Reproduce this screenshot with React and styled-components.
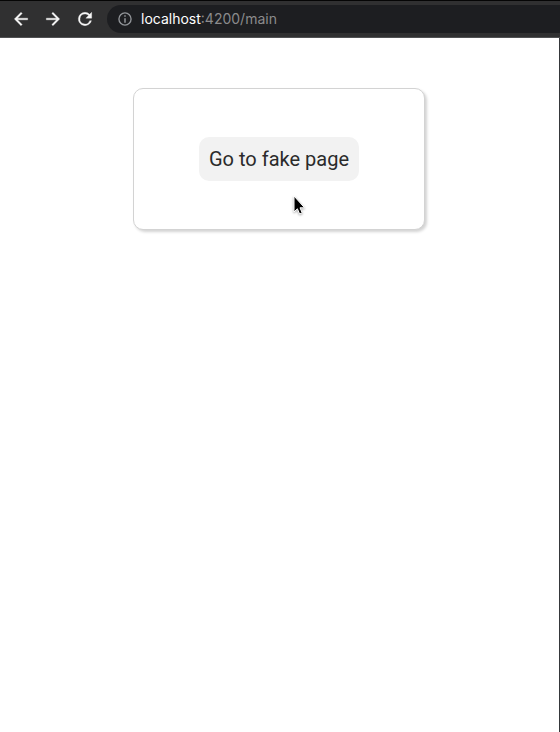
import React from "react";
import styled, { createGlobalStyle } from "styled-components";

const GlobalStyle = createGlobalStyle`
  *, *::before, *::after { box-sizing: border-box; }
  body { margin: 0; background: #ffffff; font-family: Roboto, sans-serif; }
`;

const Window = styled.div`
  display: flex;
  flex-direction: column;
  min-height: 100vh;
`;

const Toolbar = styled.header`
  display: flex;
  align-items: center;
  height: 38px;
  padding-left: 10px;
  background: #303031;
  border-top: 1px solid #050505;
  border-bottom: 1px solid #505153;
`;

const Navigation = styled.nav`
  display: flex;
  gap: 10px;
  margin-right: 11px;
`;

const IconButton = styled.button`
  display: flex;
  align-items: center;
  justify-content: center;
  width: 22px;
  height: 22px;
  padding: 0;
  border: 0;
  background: none;
  color: #f7f7f7;
`;

const Icon = styled.svg`
  display: block;
  flex: none;
  width: ${(p) => p.$size}px;
  height: ${(p) => p.$size}px;
  fill: currentColor;
`;

const AddressBar = styled.form`
  display: flex;
  flex: 1;
  align-items: center;
  height: 28px;
  padding-left: 9px;
  border-radius: 14px 0 0 14px;
  background: #1d1e21;
  color: #929599;
  font: 14px/18px Inter, sans-serif;
`;

const Host = styled.label`
  margin-left: 7px;
  color: #ffffff;
`;

const PathInput = styled.input`
  flex: 1;
  min-width: 0;
  padding: 0;
  border: 0;
  outline: 0;
  background: none;
  color: #8b8b8c;
  font: inherit;
`;

const Page = styled.main`
  display: flex;
  flex: 1;
  align-items: flex-start;
  justify-content: center;
  padding: 50px 17px 50px 16px;
  border-right: 1px solid #35373a;
`;

const Card = styled.section`
  position: relative;
  padding: 48px 65px;
  border: 1px solid #d3d3d3;
  border-radius: 10px;
  background: #ffffff;
  box-shadow: 2px 2px 3px #d3d3d3;
`;

const PageButton = styled.button`
  height: 44px;
  padding: 0 10px;
  border: 0;
  border-radius: 10px;
  background: #f2f2f2;
  color: #2b2b2b;
  font: 400 20px/24px Roboto, sans-serif;
  white-space: nowrap;
`;

const Pointer = styled.svg`
  position: absolute;
  top: 106px;
  left: 158px;
  width: 14px;
  height: 21px;
  filter: drop-shadow(0 1px 1px rgba(0, 0, 0, 0.35));
  pointer-events: none;
`;

export default function App() {
  return (
    <Window>
      <GlobalStyle />
      <Toolbar>
        <Navigation aria-label="Browser navigation">
          <IconButton type="button" aria-label="Back">
            <Icon $size={20} viewBox="0 0 24 24" aria-hidden="true">
              <path d="M20 11H7.83l5.59-5.59L12 4l-8 8 8 8 1.41-1.41L7.83 13H20z" stroke="currentColor" strokeWidth="0.4" />
            </Icon>
          </IconButton>
          <IconButton type="button" aria-label="Forward">
            <Icon $size={20} viewBox="0 0 24 24" aria-hidden="true">
              <path d="M12 4l-1.41 1.41L16.17 11H4v2h12.17l-5.58 5.59L12 20l8-8z" stroke="currentColor" strokeWidth="0.4" />
            </Icon>
          </IconButton>
          <IconButton type="button" aria-label="Reload">
            <Icon $size={20} viewBox="0 0 24 24" aria-hidden="true">
              <path d="M17.65 6.35A7.96 7.96 0 0 0 12 4a8 8 0 1 0 7.73 10h-2.08A6 6 0 1 1 12 6c1.66 0 3.14.69 4.22 1.78L13 11h7V4z" stroke="currentColor" strokeWidth="0.4" />
            </Icon>
          </IconButton>
        </Navigation>
        <AddressBar onSubmit={(event) => event.preventDefault()}>
          <Icon $size={18} viewBox="0 0 24 24" aria-hidden="true">
            <path d="M11 7h2v2h-2zm0 4h2v6h-2zm1-8a9 9 0 1 0 0 18 9 9 0 0 0 0-18zm0 16.200a7.200 7.200 0 1 1 0-14.400 7.200 7.200 0 0 1 0 14.400z" />
          </Icon>
          <Host htmlFor="address-path">localhost</Host>
          <PathInput id="address-path" defaultValue=":4200/main" spellCheck={false} />
        </AddressBar>
      </Toolbar>
      <Page>
        <Card>
          <PageButton type="button">Go to fake page</PageButton>
          <Pointer viewBox="0 0 14 21" aria-hidden="true">
            <path d="M2 1v16l3.400-3.200 2.200 5.200 2.600-1.100-2.200-5.100h4.600z" fill="#000000" stroke="#ffffff" strokeWidth="1" />
          </Pointer>
        </Card>
      </Page>
    </Window>
  );
}
